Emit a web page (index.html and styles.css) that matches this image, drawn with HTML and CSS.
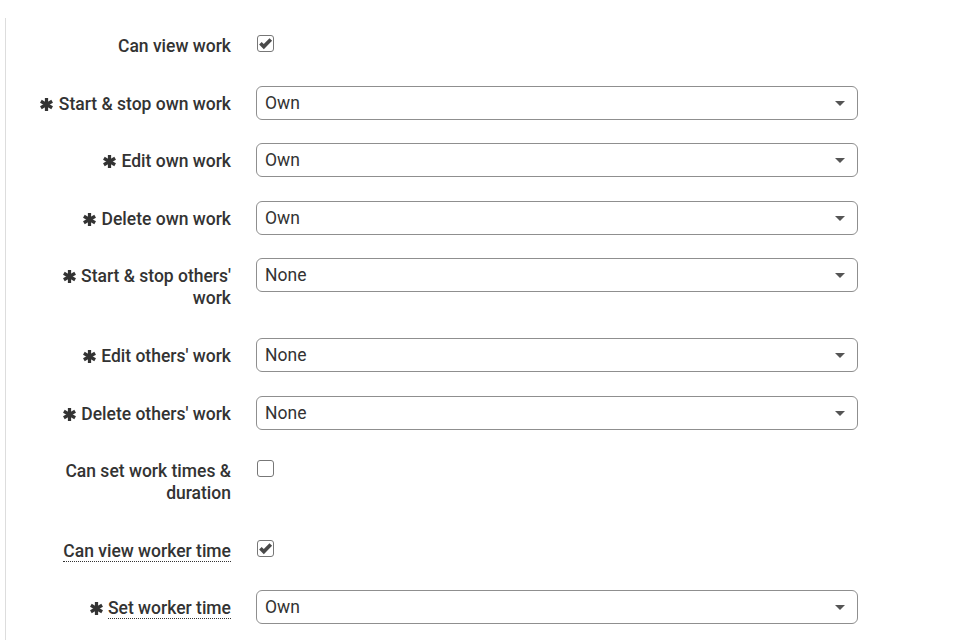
FILE: index.html
```html
<!DOCTYPE html>
<html lang="en">
<head>
  <meta charset="UTF-8">
  <title>Work permissions</title>
  <link rel="stylesheet" href="styles.css">
</head>
<body>
  <div class="panel">
    <div class="row">
      <label class="lbl">Can view work</label>
      <div class="ctl"><span class="check on"><svg viewBox="0 0 15 15"><polyline points="2.4,7.2 5.8,10.6 12.8,3.4"/></svg></span></div>
    </div>
    <div class="row">
      <label class="lbl"><svg class="req" viewBox="0 0 12 12"><line x1="6" y1="0" x2="6" y2="12"/><line x1="0.8" y1="3" x2="11.2" y2="9"/><line x1="0.8" y1="9" x2="11.2" y2="3"/></svg> Start &amp; stop own work</label>
      <div class="ctl"><div class="select"><select><option>Own</option></select></div></div>
    </div>
    <div class="row">
      <label class="lbl"><svg class="req" viewBox="0 0 12 12"><line x1="6" y1="0" x2="6" y2="12"/><line x1="0.8" y1="3" x2="11.2" y2="9"/><line x1="0.8" y1="9" x2="11.2" y2="3"/></svg> Edit own work</label>
      <div class="ctl"><div class="select"><select><option>Own</option></select></div></div>
    </div>
    <div class="row">
      <label class="lbl"><svg class="req" viewBox="0 0 12 12"><line x1="6" y1="0" x2="6" y2="12"/><line x1="0.8" y1="3" x2="11.2" y2="9"/><line x1="0.8" y1="9" x2="11.2" y2="3"/></svg> Delete own work</label>
      <div class="ctl"><div class="select"><select><option>Own</option></select></div></div>
    </div>
    <div class="row">
      <label class="lbl"><svg class="req" viewBox="0 0 12 12"><line x1="6" y1="0" x2="6" y2="12"/><line x1="0.8" y1="3" x2="11.2" y2="9"/><line x1="0.8" y1="9" x2="11.2" y2="3"/></svg> Start &amp; stop others' work</label>
      <div class="ctl"><div class="select"><select><option>None</option></select></div></div>
    </div>
    <div class="row">
      <label class="lbl"><svg class="req" viewBox="0 0 12 12"><line x1="6" y1="0" x2="6" y2="12"/><line x1="0.8" y1="3" x2="11.2" y2="9"/><line x1="0.8" y1="9" x2="11.2" y2="3"/></svg> Edit others' work</label>
      <div class="ctl"><div class="select"><select><option>None</option></select></div></div>
    </div>
    <div class="row">
      <label class="lbl"><svg class="req" viewBox="0 0 12 12"><line x1="6" y1="0" x2="6" y2="12"/><line x1="0.8" y1="3" x2="11.2" y2="9"/><line x1="0.8" y1="9" x2="11.2" y2="3"/></svg> Delete others' work</label>
      <div class="ctl"><div class="select"><select><option>None</option></select></div></div>
    </div>
    <div class="row">
      <label class="lbl">Can set work times &amp; duration</label>
      <div class="ctl"><span class="check"></span></div>
    </div>
    <div class="row">
      <label class="lbl"><span class="hint">Can view worker time</span></label>
      <div class="ctl"><span class="check on"><svg viewBox="0 0 15 15"><polyline points="2.4,7.2 5.8,10.6 12.8,3.4"/></svg></span></div>
    </div>
    <div class="row">
      <label class="lbl"><svg class="req" viewBox="0 0 12 12"><line x1="6" y1="0" x2="6" y2="12"/><line x1="0.8" y1="3" x2="11.2" y2="9"/><line x1="0.8" y1="9" x2="11.2" y2="3"/></svg> <span class="hint">Set worker time</span></label>
      <div class="ctl"><div class="select"><select><option>Own</option></select></div></div>
    </div>
  </div>
</body>
</html>
```
FILE: styles.css
```css
*{margin: 0; padding: 0; box-sizing: border-box;}
body{background: #fff; font-family: Roboto, "Liberation Sans", sans-serif; font-size: 17.5px; color: #333;}
div.panel{margin: 18px 0 0 5px; border-left: 1px solid #ddd; padding: 10px 0 40px; display: flex; flex-direction: column; gap: 22px; min-height: 700px;}
div.row{display: grid; grid-template-columns: 225px 602px; column-gap: 25px; align-items: start;}
label.lbl{justify-self: end; max-width: 200px; text-align: right; font-weight: 500; line-height: 22px; padding: 7px 0 6.6px;}
svg.req{width: 13px; height: 13px; vertical-align: -1px; margin-right: 1px; stroke: #333; stroke-width: 3;}
span.hint{border-bottom: 1px dotted #333;}
div.ctl{min-height: 34px;}
span.check{display: block; width: 17px; height: 17px; margin: 7px 0 0 1px; border: 1px solid #777; border-radius: 3px; background: #fff;}
span.check svg{display: block; width: 15px; height: 15px; fill: none; stroke: #4a4a4a; stroke-width: 3.6;}
div.select{position: relative;}
div.select:after{content: ""; position: absolute; right: 13px; top: 15px; border-left: 5px solid transparent; border-right: 5px solid transparent; border-top: 5px solid #555;}
div.select select{appearance: none; -webkit-appearance: none; display: block; width: 100%; height: 34px; padding: 0 30px 0 8px; border: 1px solid #8f8f8f; border-radius: 6px; background: #fff; font-family: Roboto, "Liberation Sans", sans-serif; font-size: 17.5px; color: #333; outline: none;}
```
